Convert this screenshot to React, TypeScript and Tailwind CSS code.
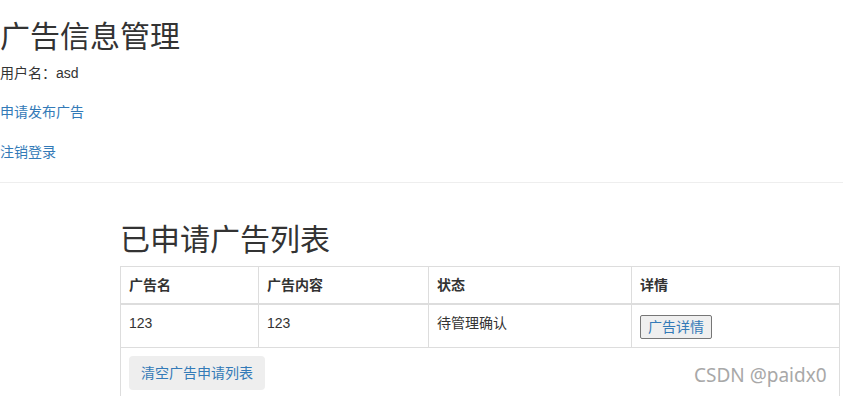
const font = "font-['Liberation_Sans','Noto_Sans_CJK_SC',sans-serif]";

const rows = [{ name: '123', content: '123', status: '待管理确认' }];

export default function App() {
  return (
    <div className={`${font} relative h-[396px] w-[843px] overflow-hidden bg-white text-[14px] leading-[20px] text-[#333]`}>
      <h2 className="mt-[20px] mb-[10px] text-[30px] leading-[33px] font-normal">广告信息管理</h2>
      <p>用户名：asd</p>
      <p className="mt-[19px]">
        <a className="text-[#337ab7]">申请发布广告</a>
      </p>
      <p className="mt-[20px]">
        <a className="text-[#337ab7]">注销登录</a>
      </p>
      <hr className="mt-[20px] mb-[20px] border-t border-[#eee]" />

      <div className="ml-[120px] w-[720px]">
        <h2 className="mt-[40px] mb-[10px] text-[30px] leading-[33px] font-normal">已申请广告列表</h2>
        <table className="w-full border-collapse border border-[#ddd]">
          <thead>
            <tr>
              <th className="w-[138px] border border-b-2 border-[#ddd] p-[8px] text-left font-bold">广告名</th>
              <th className="w-[170px] border border-b-2 border-[#ddd] p-[8px] text-left font-bold">广告内容</th>
              <th className="w-[203px] border border-b-2 border-[#ddd] p-[8px] text-left font-bold">状态</th>
              <th className="border border-b-2 border-[#ddd] p-[8px] text-left font-bold">详情</th>
            </tr>
          </thead>
          <tbody>
            {rows.map((r) => (
              <tr key={r.name}>
                <td className="border border-[#ddd] p-[8px] align-top">{r.name}</td>
                <td className="border border-[#ddd] p-[8px] align-top">{r.content}</td>
                <td className="border border-[#ddd] p-[8px] align-top">{r.status}</td>
                <td className="border border-[#ddd] px-[8px] pt-[10px] pb-[8px] align-top">
                  <button className="rounded-[2px] border border-[#767676] bg-[#efefef] px-[7px] py-[1px] text-[14px] leading-[20px] text-[#337ab7]">
                    广告详情
                  </button>
                </td>
              </tr>
            ))}
            <tr>
              <td colSpan={4} className="border border-[#ddd] px-[8px] pt-[8px] pb-[20px] align-top">
                <button className="rounded-[4px] bg-[#eee] px-[12px] py-[7px] text-[14px] leading-[20px] text-[#337ab7]">
                  清空广告申请列表
                </button>
              </td>
            </tr>
          </tbody>
        </table>
      </div>

      <span className="absolute top-[362px] left-[694px] font-['Noto_Sans',sans-serif] text-[19px] leading-[26px] text-[#a8a8a8]">
        CSDN @paidx0
      </span>
    </div>
  );
}
